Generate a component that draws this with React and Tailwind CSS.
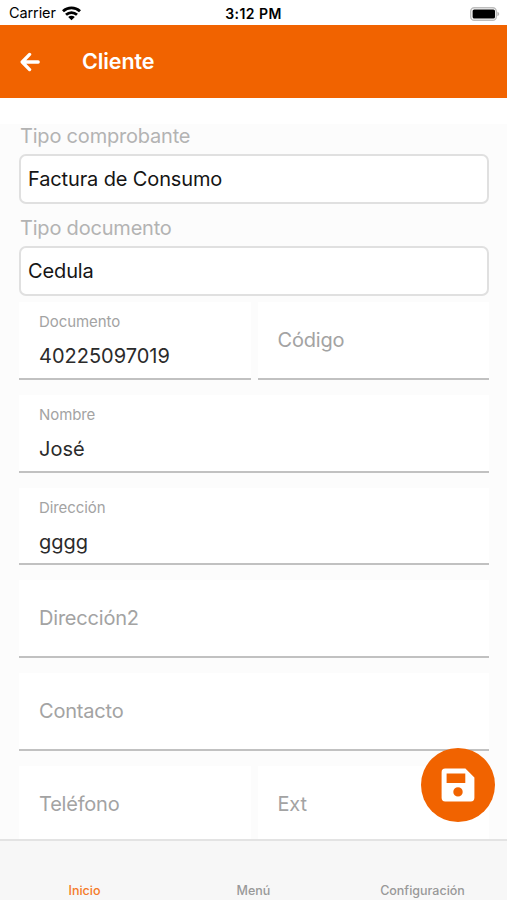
import React, { useState } from 'react';

const TABS = ['Inicio', 'Menú', 'Configuración'];

function StatusBar() {
  return (
    <div className="relative flex h-[25px] shrink-0 items-center justify-between bg-white pt-[2px] pr-[7px] pl-[9px] text-black">
      <div className="flex items-center gap-[6px]">
        <span className="text-[14.5px] leading-none tracking-[-0.1px]">Carrier</span>
        <svg width="19" height="15" viewBox="0 0 19 15" fill="none" stroke="currentColor" strokeWidth="2.8">
          <path d="M1 5.2C5.8 .7 13.2 .7 18 5.2" />
          <path d="M4 8.7C7.2 5.8 11.8 5.8 15 8.7" />
          <path d="M6.2 11C8.1 9.2 10.9 9.2 12.8 11L9.5 14.3Z" fill="currentColor" stroke="none" />
        </svg>
      </div>
      <span className="absolute left-1/2 -translate-x-1/2 text-[14px] leading-none font-semibold tracking-[0.45px] whitespace-nowrap">
        3:12 PM
      </span>
      <svg width="30" height="14" viewBox="0 0 30 14">
        <rect x="0.7" y="0.7" width="25.6" height="12.6" rx="3.6" fill="#fff" stroke="#bdbdbd" strokeWidth="1.4" />
        <rect x="2.6" y="2.5" width="22.4" height="9" rx="1.6" fill="#000" />
        <path d="M27.4 4.8c1.1.4 1.8 1.2 1.8 2.2s-.7 1.8-1.8 2.2z" fill="#b5b5b5" />
      </svg>
    </div>
  );
}

function Header() {
  return (
    <header className="flex h-[73px] shrink-0 items-center bg-[#f16300] pl-5 text-white">
      <button type="button" aria-label="Volver">
        <svg width="20" height="20" viewBox="0 0 20 20" fill="none" stroke="currentColor" strokeWidth="3.3" strokeLinecap="round" strokeLinejoin="round">
          <path d="M18.2 10H2.5M9.6 2.4L2.2 10L9.6 17.6" />
        </svg>
      </button>
      <h1 className="ml-[42px] pt-px text-[21.5px] leading-none font-semibold tracking-[-0.1px]">Cliente</h1>
    </header>
  );
}

function SelectField({ label, value }) {
  return (
    <div className="flex flex-col">
      <label className="h-[30px] pt-[2px] pl-px text-[20px] leading-[20px] tracking-[-0.2px] text-[#b3b3b3]">{label}</label>
      <div className="flex h-[50px] items-center rounded-[7px] border-2 border-[#e0e0e0] bg-white pl-[7px] text-[20px] leading-none tracking-[-0.13px] text-[#151515]">
        {value}
      </div>
    </div>
  );
}

function TextField({ label, value }) {
  return (
    <div className="flex h-[77.8px] flex-1 flex-col border-b-2 border-[#c1c1c1] bg-white px-5">
      {value ? (
        <>
          <label className="pt-[12px] text-[15px] leading-[16px] tracking-[-0.08px] text-[#a3a3a3]">{label}</label>
          <span className="pt-[16px] text-[20px] leading-[20px] text-[#2b2b2b]">{value}</span>
        </>
      ) : (
        <label className="pt-[28px] text-[20px] leading-[20px] tracking-[-0.2px] text-[#a3a3a3]">{label}</label>
      )}
    </div>
  );
}

function SaveIcon() {
  return (
    <svg width="34" height="34" viewBox="0 0 34 34">
      <path
        fill="#fff"
        fillRule="evenodd"
        d="M4.2.6H24.4L33.4 9.4V29.8a3.6 3.6 0 0 1-3.6 3.6H4.2A3.6 3.6 0 0 1 .6 29.8V4.2A3.6 3.6 0 0 1 4.2.6ZM5.6 5.6V14.9H24.3V5.6ZM17 19.2a4.7 4.7 0 1 0 0 9.4a4.7 4.7 0 1 0 0-9.4Z"
      />
    </svg>
  );
}

export default function App() {
  const [activeTab, setActiveTab] = useState('Inicio');

  return (
    <div className="relative flex h-[900px] w-[507px] flex-col overflow-hidden bg-white font-['Inter','Liberation_Sans',sans-serif]">
      <StatusBar />
      <Header />

      {/* Form */}
      <main className="mt-[26px] min-h-0 flex-1 overflow-hidden bg-[#fcfcfc] pr-[18px] pl-[19px]">
        <SelectField label="Tipo comprobante" value="Factura de Consumo" />
        <div className="mt-[11.6px]">
          <SelectField label="Tipo documento" value="Cedula" />
        </div>
        <div className="mt-[6.4px] flex flex-col gap-[15px]">
          <div className="flex gap-[7px]">
            <TextField label="Documento" value="40225097019" />
            <TextField label="Código" />
          </div>
          <div className="flex"><TextField label="Nombre" value="José" /></div>
          <div className="flex"><TextField label="Dirección" value="gggg" /></div>
          <div className="flex"><TextField label="Dirección2" /></div>
          <div className="flex"><TextField label="Contacto" /></div>
          <div className="flex gap-[7px]">
            <TextField label="Teléfono" />
            <TextField label="Ext" />
          </div>
        </div>
      </main>

      {/* Bottom tabs */}
      <nav className="flex h-[61px] shrink-0 border-t-2 border-[#e3e3e3] bg-[#f7f7f7]">
        {TABS.map((tab) => (
          <button
            key={tab}
            type="button"
            onClick={() => setActiveTab(tab)}
            className={`flex flex-1 items-end justify-center pb-[3px] text-[12.5px] leading-[13px] font-medium ${
              activeTab === tab ? 'text-[#f47b29]' : 'text-[#999999]'
            }`}
          >
            {tab}
          </button>
        ))}
      </nav>

      {/* Floating save button */}
      <button
        type="button"
        aria-label="Guardar"
        className="absolute right-[12px] bottom-[78px] flex size-[74px] items-center justify-center rounded-full bg-[#f16300]"
      >
        <SaveIcon />
      </button>
    </div>
  );
}
